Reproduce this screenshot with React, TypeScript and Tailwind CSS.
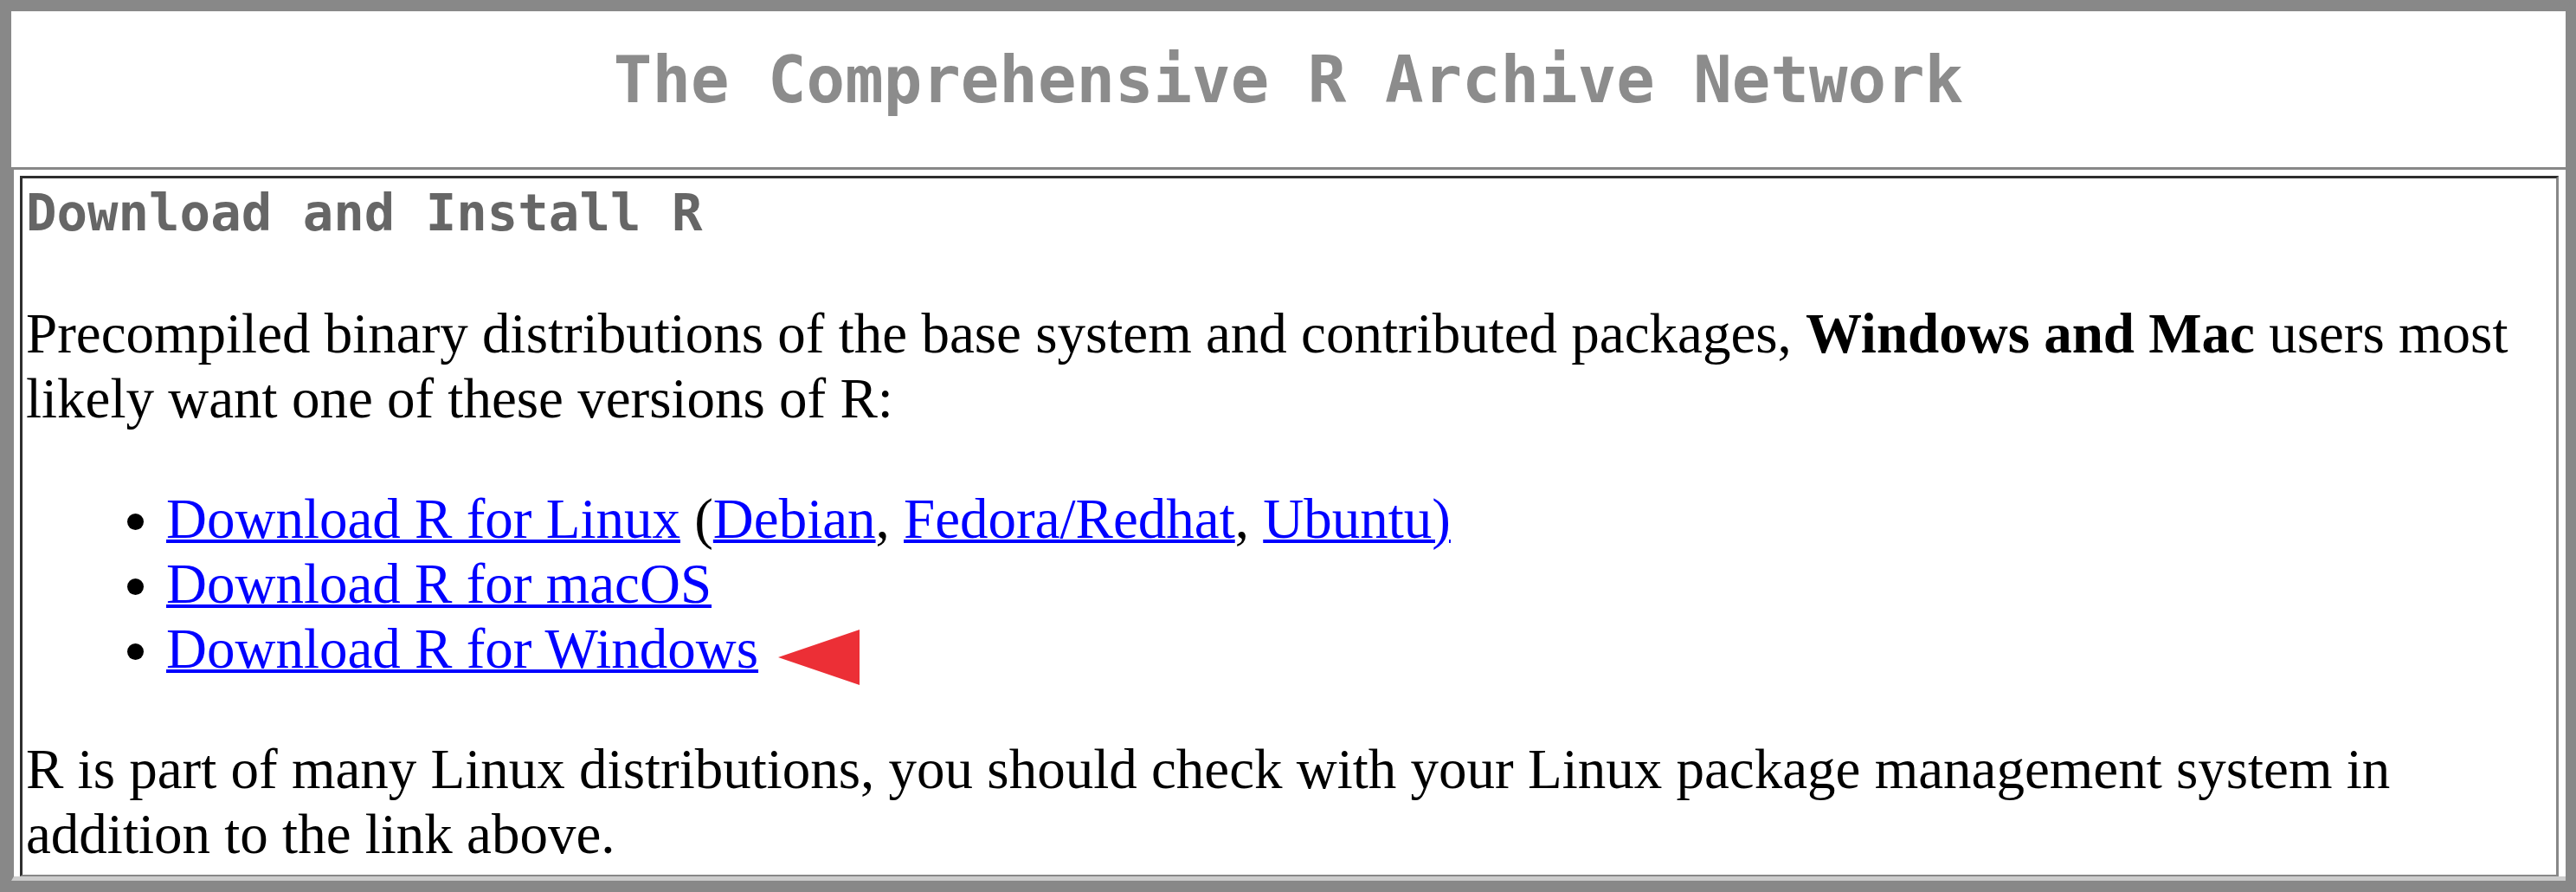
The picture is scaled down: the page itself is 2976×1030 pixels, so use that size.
import React from "react";

export default function App() {
  return (
    <div className="w-full h-[1030px] bg-white border-solid border-[#888888] border-t-[13px] border-l-[13px] border-r-[12px] border-b-[13px] flex flex-col font-['Liberation_Serif','Times_New_Roman',serif] text-black">
      <div className="h-[180px] shrink-0 pt-[36px] text-center">
        <h1 className="m-0 text-[74px] leading-[86px] font-bold text-[#8c8c8c] font-['DejaVu_Sans_Mono',monospace]">
          The Comprehensive R Archive Network
        </h1>
      </div>
      <div className="flex-1 flex flex-col border-solid border-t-[3px] border-l-[3px] border-b-[5px] border-t-[#888888] border-l-[#888888] border-b-[#cccccc] pt-[7px] pl-[7px] pr-[8px]">
        <div className="flex-1 flex flex-col border-solid border-t-[3px] border-l-[3px] border-r-[3px] border-b-[2px] border-t-[#2e2e2e] border-l-[#2e2e2e] border-r-[#888888] border-b-[#888888] pl-[4px] pr-[4px]">
          <h2 className="m-0 mt-[5px] text-[59px] leading-[70px] font-bold text-[#666666] font-['DejaVu_Sans_Mono',monospace]">
            Download and Install R
          </h2>
          <p className="m-0 mt-[67px] text-[65px] leading-[75px]">
            Precompiled binary distributions of the base system and contributed packages,{" "}
            <b className="font-bold">Windows and Mac</b> users most likely want one of these versions of R:
          </p>
          <ul className="m-0 mt-[64px] pl-[162px] list-disc text-[65px] leading-[75px]">
            <li>
              <a href="#" className="text-[#0000ff] underline decoration-[4px]">Download R for Linux</a>{" "}
              (<a href="#" className="text-[#0000ff] underline decoration-[4px]">Debian</a>,{" "}
              <a href="#" className="text-[#0000ff] underline decoration-[4px]">Fedora/Redhat</a>,{" "}
              <a href="#" className="text-[#0000ff] underline decoration-[4px]">Ubuntu)</a>
            </li>
            <li>
              <a href="#" className="text-[#0000ff] underline decoration-[4px]">Download R for macOS</a>
            </li>
            <li>
              <span className="relative">
                <a href="#" className="text-[#0000ff] underline decoration-[4px]">Download R for Windows</a>
                <svg
                  className="absolute left-full top-[14px] ml-[23px]"
                  width="95"
                  height="65"
                  viewBox="0 0 95 65"
                >
                  <polygon points="0,32 94,0 94,64" fill="#ec2f36" />
                </svg>
              </span>
            </li>
          </ul>
          <p className="m-0 mt-[64px] text-[65px] leading-[75px]">
            R is part of many Linux distributions, you should check with your Linux package management system in
            addition to the link above.
          </p>
        </div>
      </div>
    </div>
  );
}
